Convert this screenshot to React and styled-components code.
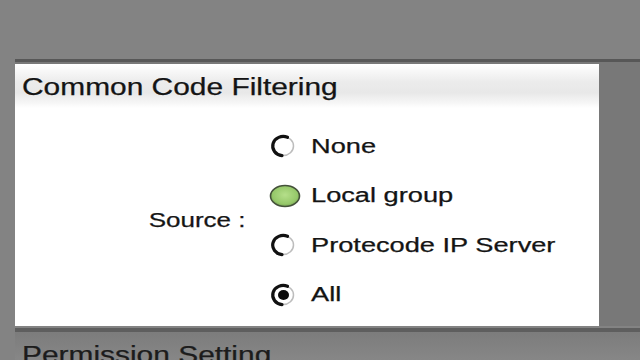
import React, { useState } from "react";
import styled, { createGlobalStyle } from "styled-components";

const GlobalStyle = createGlobalStyle`
  html, body {
    margin: 0;
    padding: 0;
    background: #828282;
  }
  body {
    font-family: "Liberation Sans", Arial, sans-serif;
  }
`;

const Page = styled.div`
  width: 640px;
  height: 360px;
  overflow: hidden;
  background: #838383;
  display: flex;
  flex-direction: column;
`;

const TopSpace = styled.div`
  height: 59px;
  flex-shrink: 0;
`;

const Section = styled.section`
  margin-left: 15px;
  background: #787878;
  border-top: 3px solid #575757;
  padding-top: 2px;
  flex-shrink: 0;
`;

const Panel = styled.div`
  width: 584px;
  background: #ffffff;
  display: flex;
  flex-direction: column;
`;

const PanelHeader = styled.div`
  height: 44px;
  padding-left: 7px;
  display: flex;
  align-items: center;
  background: linear-gradient(
    #ffffff 0%,
    #ececec 40%,
    #e8e8e8 65%,
    #f6f6f6 88%,
    #ffffff 100%
  );
`;

const Stretch = styled.span`
  display: inline-block;
  white-space: nowrap;
  transform: scaleX(${(p) => p.$scale || 1.3});
  transform-origin: ${(p) => (p.$right ? "right center" : "left center")};
  -webkit-text-stroke: 0.25px currentColor;
`;

const Title = styled(Stretch)`
  font-size: 23px;
  color: #141414;
  margin-top: 2px;
`;

const PanelBody = styled.div`
  height: 218px;
  display: flex;
  align-items: center;
`;

const FieldLabel = styled.div`
  width: 230px;
  display: flex;
  justify-content: flex-end;
  font-size: 20px;
  color: #161616;
  margin-top: 7px;
`;

const RadioList = styled.div`
  margin-left: 24px;
  display: flex;
  flex-direction: column;
  margin-top: 7px;
`;

const RadioRow = styled.label`
  height: 49.5px;
  display: flex;
  align-items: center;
  gap: 10px;
  cursor: pointer;
`;

const RadioText = styled(Stretch)`
  font-size: 20px;
  color: #141414;
`;

const BottomRule = styled.div`
  margin-left: 15px;
  height: 4px;
  background: #5e5e5e;
  margin-top: 2px;
  flex-shrink: 0;
`;

const NextSection = styled.div`
  flex: 1;
  margin-left: 15px;
  background: linear-gradient(#7c7c7c, #8a8a8a);
  padding: 10px 0 0 7px;
`;

const NextTitle = styled(Stretch)`
  font-size: 23px;
  color: #1c1c1c;
`;

function RadioIcon({ state }) {
  if (state === "hover") {
    return (
      <svg width="32" height="26" viewBox="0 0 32 26">
        <defs>
          <radialGradient id="greenFill" cx="50%" cy="45%" r="60%">
            <stop offset="0%" stopColor="#b5df8a" />
            <stop offset="70%" stopColor="#96c86a" />
            <stop offset="100%" stopColor="#6f9a4c" />
          </radialGradient>
        </defs>
        <ellipse
          cx="16"
          cy="13"
          rx="14.5"
          ry="10.5"
          fill="url(#greenFill)"
          stroke="#44513a"
          strokeWidth="1.6"
        />
      </svg>
    );
  }
  return (
    <svg width="32" height="26" viewBox="0 0 32 26">
      <ellipse
        cx="14"
        cy="13"
        rx="10.5"
        ry="9.6"
        fill="#ffffff"
        stroke="#bdbdbd"
        strokeWidth="1.5"
      />
      <path
        d="M18.5 4.3 A10.5 9.6 0 1 0 13 22.6"
        fill="none"
        stroke="#111111"
        strokeWidth="3.2"
        strokeLinecap="round"
      />
      {state === "checked" && <ellipse cx="14.5" cy="13" rx="5.5" ry="5" fill="#0c0c0c" />}
    </svg>
  );
}

const options = ["None", "Local group", "Protecode IP Server", "All"];

export default function App() {
  const [selected, setSelected] = useState("All");
  const hovered = "Local group";

  return (
    <Page>
      <GlobalStyle />
      <TopSpace />
      <Section>
        <Panel>
          <PanelHeader>
            <Title>Common Code Filtering</Title>
          </PanelHeader>
          <PanelBody>
            <FieldLabel>
              <Stretch $right>Source :</Stretch>
            </FieldLabel>
            <RadioList>
              {options.map((opt) => (
                <RadioRow key={opt} onClick={() => setSelected(opt)}>
                  <RadioIcon
                    state={
                      opt === hovered && opt !== selected
                        ? "hover"
                        : opt === selected
                        ? "checked"
                        : "off"
                    }
                  />
                  <RadioText $scale={1.36}>{opt}</RadioText>
                </RadioRow>
              ))}
            </RadioList>
          </PanelBody>
        </Panel>
      </Section>
      <BottomRule />
      <NextSection>
        <NextTitle>Permission Setting</NextTitle>
      </NextSection>
    </Page>
  );
}
